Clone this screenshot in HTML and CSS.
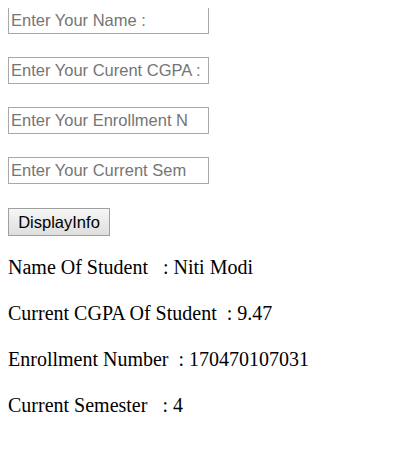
FILE: index.html
```html
<!DOCTYPE html>
<html>
<head>
<meta charset="utf-8">
<link rel="stylesheet" href="styles.css">
</head>
<body>
<form class="form">
  <input class="field" type="text" placeholder="Enter Your Name :">
  <input class="field" type="text" placeholder="Enter Your Curent CGPA :">
  <input class="field" type="text" placeholder="Enter Your Enrollment N">
  <input class="field" type="text" placeholder="Enter Your Current Sem">
  <button class="btn" type="button">DisplayInfo</button>
</form>
<div class="info">
  <p class="line">Name Of Student&nbsp;&nbsp;&nbsp;: Niti Modi</p>
  <p class="line">Current CGPA Of Student&nbsp;&nbsp;: 9.47</p>
  <p class="line">Enrollment Number&nbsp;&nbsp;: 170470107031</p>
  <p class="line">Current Semester&nbsp;&nbsp;&nbsp;: 4</p>
</div>
</body>
</html>
```
FILE: styles.css
```css
body {
  margin: 8px;
  font-family: "Liberation Serif", serif;
  background: #fff;
}
.form {
  display: flex;
  flex-direction: column;
  align-items: flex-start;
  gap: 23px;
  margin-top: -1px;
}
.field {
  width: 201px;
  height: 27px;
  box-sizing: border-box;
  border: 1px solid #a9a9a9;
  padding: 1px 2px;
  font-family: "Liberation Sans", Arial, sans-serif;
  font-size: 16.5px;
  color: #000;
  background: #fff;
  outline: none;
}
.field::placeholder {
  color: #757575;
}
.btn {
  width: 102px;
  height: 28px;
  box-sizing: border-box;
  border: 1px solid #a0a0a0;
  background: linear-gradient(#f6f6f6, #dedede);
  font-family: "Liberation Sans", Arial, sans-serif;
  font-size: 16.5px;
  color: #000;
  padding: 0 6px;
  margin-top: 1px;
}
.info {
  margin-top: 20px;
}
.line {
  margin: 0 0 23px;
  font-size: 20px;
  line-height: 23px;
  color: #000;
}
```
